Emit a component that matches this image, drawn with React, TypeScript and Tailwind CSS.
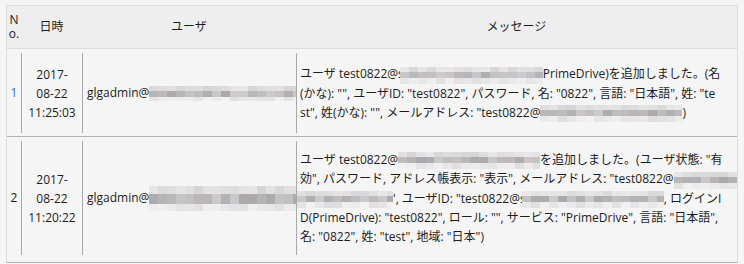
import type { ReactNode } from 'react'

// pixelated mosaic that stands in for the masked parts of the screenshot
function Blur({ w, h = 17, seed = 1, className = '' }: { w: number; h?: number; seed?: number; className?: string }) {
  const cols = Math.ceil(w / 9)
  let s = seed * 9301 + 49297
  const rnd = () => {
    s = (s * 9301 + 49297) % 233280
    return s / 233280
  }
  const gray = (lo: number, hi: number) => {
    const v = Math.round(lo + rnd() * (hi - lo))
    const tint = rnd() > 0.7 ? 4 : 0
    return `rgb(${v + tint},${v},${v + 2})`
  }
  const top = Math.round(h * 0.3)
  const mid = Math.round(h * 0.38)
  const bot = h - top - mid

  return (
    <span className={`inline-flex align-middle overflow-hidden shrink-0 ${className}`} style={{ width: w, height: h }}>
      {Array.from({ length: cols }).map((_, i) => (
        <span key={i} className="flex flex-col w-[9px] shrink-0">
          <span style={{ height: top, background: gray(212, 232) }} />
          <span style={{ height: mid, background: gray(168, 205) }} />
          <span style={{ height: bot, background: gray(222, 242) }} />
        </span>
      ))}
    </span>
  )
}

function Lines({ children }: { children: ReactNode }) {
  return <div className="leading-[19px] whitespace-nowrap">{children}</div>
}

export default function App() {
  return (
    <div className="w-[744px] h-[264px] overflow-hidden bg-[#f5f5f5] pl-[6px] pt-[5px] text-[12px] text-[#1c1c1c] font-['Open_Sans','Noto_Sans_CJK_JP',sans-serif]">
      <div className="w-[732px] border-x border-t border-[#dcdcdc]">
        {/* header */}
        <div className="flex h-[43px] bg-[#eeeeee] border-b border-[#dcdcdc]">
          <div className="w-[14px] shrink-0 flex flex-col items-center justify-center leading-[14px]">
            <span>N</span>
            <span>o.</span>
          </div>
          <div className="w-[61px] shrink-0 flex items-center justify-center">日時</div>
          <div className="w-[214px] shrink-0 flex items-center justify-center">ユーザ</div>
          <div className="flex-1 min-w-0 flex items-center justify-center">メッセージ</div>
        </div>

        {/* row 1 */}
        <div className="flex h-[88px] border-b border-[#b2b2b2] pt-[4px] pb-[3px]">
          <div className="w-[14px] shrink-0 flex items-center justify-center text-[#2f6db8]">1</div>
          <div className="w-[61px] shrink-0 border-l border-[#a9a9a9] flex items-center justify-center text-center leading-[19px]">
            2017-
            <br />
            08-22
            <br />
            11:25:03
          </div>
          <div className="w-[214px] shrink-0 border-l border-[#a9a9a9] flex items-center pl-[4px] overflow-hidden">
            <span>glgadmin@</span>
            <Blur w={150} h={15} seed={3} />
          </div>
          <div className="flex-1 min-w-0 border-l border-[#a9a9a9] flex items-center pl-[3px] overflow-hidden">
            <div>
              <Lines>
                ユーザ test0822@s<Blur w={143} seed={5} className="-ml-[4px]" />PrimeDrive)を追加しました。(名
              </Lines>
              <Lines>(かな): "", ユーザID: "test0822", パスワード, 名: "0822", 言語: "日本語", 姓: "te</Lines>
              <Lines>
                st", 姓(かな): "", メールアドレス: "test0822@<Blur w={142} seed={8} />)
              </Lines>
            </div>
          </div>
        </div>

        {/* row 2 */}
        <div className="flex h-[126px] border-b border-[#b2b2b2] pt-[4px] pb-[7px]">
          <div className="w-[14px] shrink-0 flex items-center justify-center">2</div>
          <div className="w-[61px] shrink-0 border-l border-[#a9a9a9] flex items-center justify-center text-center leading-[19px]">
            2017-
            <br />
            08-22
            <br />
            11:20:22
          </div>
          <div className="w-[214px] shrink-0 border-l border-[#a9a9a9] flex items-center pl-[4px] overflow-hidden">
            <span>glgadmin@</span>
            <Blur w={150} h={25} seed={11} />
          </div>
          <div className="flex-1 min-w-0 border-l border-[#a9a9a9] flex items-center pl-[3px] overflow-hidden">
            <div>
              <Lines>
                ユーザ test0822@<Blur w={142} seed={13} />を追加しました。(ユーザ状態: "有
              </Lines>
              <Lines>
                効", パスワード, アドレス帳表示: "表示", メールアドレス: "test0822@<Blur w={120} seed={17} />
              </Lines>
              <Lines>
                <Blur w={96} seed={19} className="-ml-[3px]" />', ユーザID: "test0822@s<Blur w={142} seed={23} className="-ml-[4px]" />, ログインI
              </Lines>
              <Lines>D(PrimeDrive): "test0822", ロール: "", サービス: "PrimeDrive", 言語: "日本語",</Lines>
              <Lines>名: "0822", 姓: "test", 地域: "日本")</Lines>
            </div>
          </div>
        </div>
      </div>
    </div>
  )
}
